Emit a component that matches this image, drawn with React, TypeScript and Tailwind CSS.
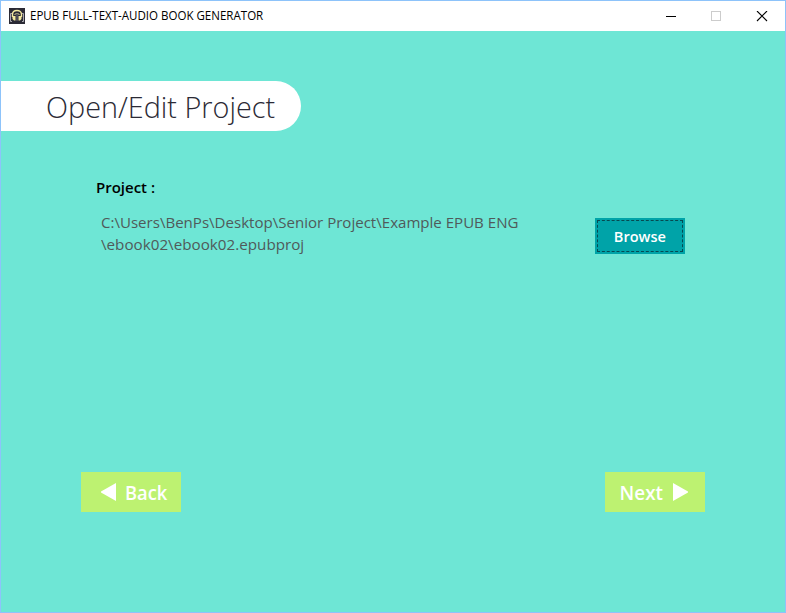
import type { ReactNode } from 'react';

function HeadphonesBookIcon() {
  return (
    <svg className="block h-4 w-4 shrink-0" viewBox="0 0 16 16" fill="none">
      <rect width="16" height="16" fill="#2b2a35" />
      <path d="M3 5.500H1.500v8H3M13 5.500h1.500v8H13" stroke="#b9b7bd" strokeWidth="0.9" />
      <path d="M3.500 9V6.500C3.500 4 5.500 2.500 8 2.500s4.500 1.500 4.500 4V9" stroke="#f3e9a0" strokeWidth="1.400" />
      <path d="M8 5v8" stroke="#77757c" strokeWidth="0.9" />
      <path d="M3.500 8h3v4.500H5L3.500 11zM9.500 8h3v3L11 12.500H9.500z" fill="#f3e9a0" />
      <path d="M5.500 6.500l2-.9M10.500 6.500l-2-.9" stroke="#f3e9a0" strokeWidth="0.9" />
    </svg>
  );
}

function TitleBar() {
  return (
    <header className="flex h-[30px] shrink-0 items-center bg-white pl-2">
      <HeadphonesBookIcon />
      <span className="ml-[5px] origin-left scale-x-[0.961] whitespace-nowrap text-[12px] leading-[16px] text-black">
        EPUB FULL-TEXT-AUDIO BOOK GENERATOR
      </span>
      <div className="ml-auto flex h-full items-center pr-[17px]">
        <svg className="h-[11px] w-[103px]" viewBox="0 0 103 11" fill="none" shapeRendering="crispEdges">
          <path d="M1 5.500h10" stroke="#000" />
          <rect x="46.500" y="0.500" width="9" height="9" stroke="#ccc" />
          <path d="M92 0l10 10M102 0L92 10" stroke="#000" shapeRendering="auto" strokeWidth="1.100" />
        </svg>
      </div>
    </header>
  );
}

function NavButton({ children }: { children: ReactNode }) {
  return (
    <button className="flex h-10 w-[100px] items-center bg-[#bdf271] text-[19px] font-semibold leading-[24px] text-white">
      {children}
    </button>
  );
}

export default function App() {
  return (
    <div className="flex h-[613px] w-[786px] flex-col overflow-hidden border border-[#8dc3fa] bg-[#6ee6d5] font-['Open_Sans','Noto_Sans',sans-serif]">
      <TitleBar />
      <main className="flex flex-1 flex-col pt-[50px]">
        <h1 className="flex h-[50px] w-[300px] items-center rounded-r-[25px] bg-white pl-[45px] pt-px text-[29px] font-light leading-[40px] text-[#2b2a35]">
          <span className="origin-left scale-x-[0.993] whitespace-nowrap">Open/Edit Project</span>
        </h1>
        <section className="mt-[46px] pl-[95px]">
          <h2 className="h-5 w-fit origin-left whitespace-nowrap text-[15px] font-semibold leading-5 text-black">Project :</h2>
          <div className="flex pl-[5px] pt-[14px]">
            <p className="w-[494px] whitespace-nowrap text-[15px] leading-[22px] text-[#505a5a]">
              <span className="block w-fit origin-left scale-x-[1.004]">C:\Users\BenPs\Desktop\Senior Project\Example EPUB ENG</span>
              <span className="block w-fit origin-left scale-x-[1.014]">\ebook02\ebook02.epubproj</span>
            </p>
            <button className="mt-[7px] h-9 w-[90px] bg-[#00a3a8] p-[2px] text-[15px] font-semibold leading-5 text-white">
              <span className="flex h-full items-center justify-center border border-dashed border-[#064a50]">
                <span className="scale-x-[0.97]">Browse</span>
              </span>
            </button>
          </div>
        </section>
        <nav className="mb-[100px] mt-auto flex justify-between pl-20 pr-20">
          <NavButton>
            <svg className="ml-5 h-5 w-4" viewBox="0 0 16 20" fill="#fff"><path d="M15 1v18L0 10.500v-1z" /></svg>
            <span className="ml-2 mt-0.5 origin-left scale-x-[0.965]">Back</span>
          </NavButton>
          <NavButton>
            <span className="ml-[14px] mt-0.5 w-[45px] origin-left scale-x-[0.99]">Next</span>
            <svg className="ml-[9px] h-5 w-4" viewBox="0 0 16 20" fill="#fff"><path d="M0 1v18l15-8.500v-1z" /></svg>
          </NavButton>
        </nav>
      </main>
    </div>
  );
}
